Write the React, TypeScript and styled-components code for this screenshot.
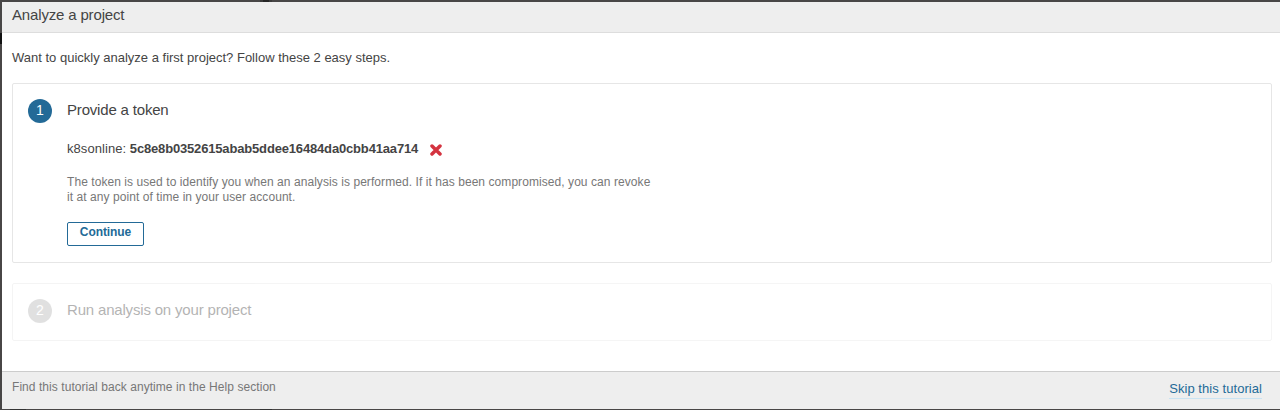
import React from "react";
import styled, { createGlobalStyle } from "styled-components";

const Global = createGlobalStyle`
  * { box-sizing: border-box; }
  body { margin: 0; background: #fff; font-family: "Liberation Sans", Arial, sans-serif; font-size: 13px; color: #444; }
`;
const Backdrop = styled.div`
  height: 410px; padding: 2px 0 1px 2px;
  background:
    linear-gradient(#262626, #262626) 263px 0 / 6px 2px no-repeat,
    linear-gradient(#3a3a3a, #3a3a3a) 260px 0 / 12px 2px no-repeat,
    linear-gradient(#111, #111) 0 33px / 2px 11px no-repeat,
    linear-gradient(#333, #333) 260px 409px / 12px 1px no-repeat,
    linear-gradient(#333, #333) 10px 409px / 16px 1px no-repeat,
    #484646;
`;
const Modal = styled.div`
  height: 100%; display: flex; flex-direction: column; background: #fff; overflow: hidden;
`;
const Header = styled.header`
  height: 31px; flex: none; background: #eee; border-bottom: 1px solid #ddd; padding: 4px 10px 0;
`;
const Title = styled.h1`
  margin: 0; font-size: 15px; line-height: 18px; font-weight: 400; letter-spacing: -0.16px;
`;
const Body = styled.main`
  flex: 1; padding: 16px 8px 0 10px;
`;
const Intro = styled.p`
  margin: 0 0 17px; line-height: 17px;
`;
const Step = styled.section<{ $inactive?: boolean }>`
  display: flex; align-items: flex-start; gap: 15px; border: 1px solid #e6e6e6; border-radius: 2px; padding: 15px;
  height: ${(p) => (p.$inactive ? 58 : 180)}px;
  margin-bottom: 20px;
  opacity: ${(p) => (p.$inactive ? 0.4 : 1)};
`;
const Num = styled.span<{ $inactive?: boolean }>`
  width: 24px; height: 24px; border-radius: 50%; flex: none; text-align: center; line-height: ${(p) => (p.$inactive ? 22 : 23)}px; font-size: 14px; color: #fff;
  background: ${(p) => (p.$inactive ? "#b4b4b4" : "#236a97")};
`;
const StepTitle = styled.h2`
  margin: 2px 0 0; font-size: 15px; line-height: 18px; font-weight: 400; letter-spacing: -0.18px;
`;
const Token = styled.div`
  display: flex; align-items: center; margin-top: 20px; height: 18px; white-space: pre; letter-spacing: 0.06px;
  strong { letter-spacing: -0.165px; }
`;
const Delete = styled.svg`
  margin: 3px 0 0 12px;
`;
const Note = styled.p`
  margin: 18px 0 17px; width: 588px; font-size: 12px; line-height: 15px; color: #777; letter-spacing: 0.066px;
`;
const Button = styled.button`
  display: block; width: 77px; height: 24px; padding: 0 0 4px; border: 1px solid #236a97; border-radius: 2px; background: #fff; color: #236a97; font: bold 12px "Liberation Sans", Arial, sans-serif; letter-spacing: -0.08px;
`;
const Footer = styled.footer`
  height: 38px; flex: none; display: flex; justify-content: space-between; align-items: flex-start; background: #eee; border-top: 1px solid #ccc; padding: 8px 18px 0 10px; font-size: 12px; line-height: 15px; color: #777; letter-spacing: 0.06px;
`;
const Skip = styled.a`
  font-size: 13px; line-height: 17px; padding-bottom: 1px; color: #236a97; border-bottom: 1px solid #cae3f2;
`;

export default function App() {
  return (
    <Backdrop>
      <Global />
      <Modal>
        <Header><Title>Analyze a project</Title></Header>
        <Body>
          <Intro>Want to quickly analyze a first project? Follow these 2 easy steps.</Intro>
          <Step>
            <Num>1</Num>
            <div>
              <StepTitle>Provide a token</StepTitle>
              <Token>
                <span>k8sonline: </span><strong>5c8e8b0352615abab5ddee16484da0cbb41aa714</strong>
                <Delete width="12" height="12" viewBox="0 0 12 12"><path d="M2 2 10 10M10 2 2 10" stroke="#d4333f" strokeWidth="3.5" strokeLinecap="round" /></Delete>
              </Token>
              <Note>The token is used to identify you when an analysis is performed. If it has been compromised, you can revoke it at any point of time in your user account.</Note>
              <Button>Continue</Button>
            </div>
          </Step>
          <Step $inactive>
            <Num $inactive>2</Num>
            <StepTitle>Run analysis on your project</StepTitle>
          </Step>
        </Body>
        <Footer><span>Find this tutorial back anytime in the Help section</span><Skip>Skip this tutorial</Skip></Footer>
      </Modal>
    </Backdrop>
  );
}
